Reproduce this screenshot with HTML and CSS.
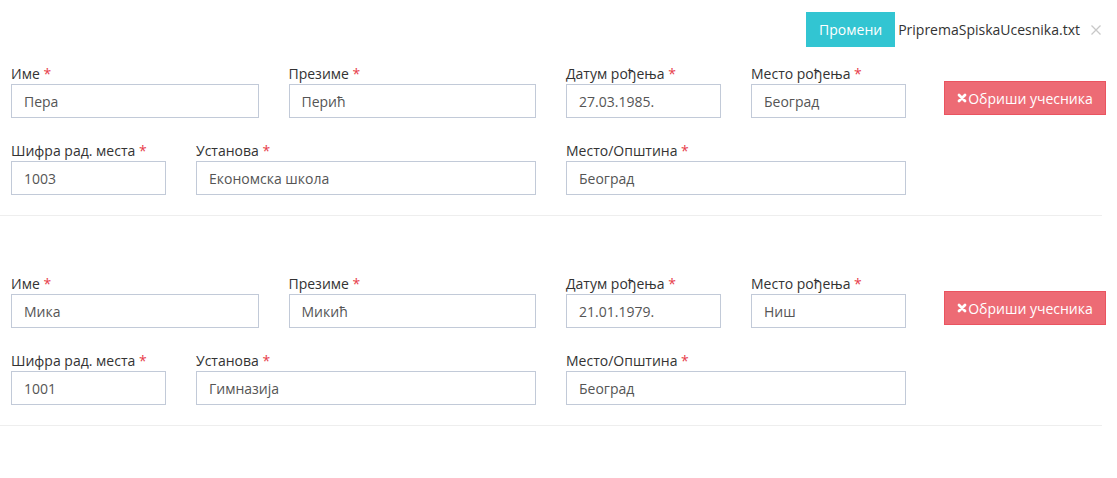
FILE: index.html
```html
<!DOCTYPE html>
<html lang="sr">
<head>
<meta charset="utf-8">
<title>Учесници</title>
<link rel="stylesheet" href="styles.css">
</head>
<body>
<div class="page">
  <div class="file-bar">
    <span class="btn btn-green">Промени</span>
    <span class="file-name">PripremaSpiskaUcesnika.txt</span>
    <svg class="file-remove" viewBox="0 0 10 10" width="10" height="10"><path d="M0.5 0.5 L9.5 9.5 M9.5 0.5 L0.5 9.5" stroke="#c8c8c8" stroke-width="1.3"/></svg>
  </div>

  <div class="participant">
    <div class="grid">
      <div class="field span3"><label>Име <span class="req">*</span></label><input class="form-control" value="Пера"></div>
      <div class="field span3"><label>Презиме <span class="req">*</span></label><input class="form-control" value="Перић"></div>
      <div class="field span2"><label>Датум рођења <span class="req">*</span></label><input class="form-control" value="27.03.1985."></div>
      <div class="field span2"><label>Место рођења <span class="req">*</span></label><input class="form-control" value="Београд"></div>
      <div class="action span2"><button class="btn btn-danger"><svg class="ico" viewBox="0 0 10 10" width="10" height="10"><path d="M2 2 L8 8 M8 2 L2 8" stroke="#fff" stroke-width="2.8" stroke-linecap="round"/></svg>Обриши учесника</button></div>
    </div>
    <div class="grid row2">
      <div class="field span2"><label>Шифра рад. места <span class="req">*</span></label><input class="form-control" value="1003"></div>
      <div class="field span4"><label>Установа <span class="req">*</span></label><input class="form-control" value="Економска школа"></div>
      <div class="field span4"><label>Место/Општина <span class="req">*</span></label><input class="form-control" value="Београд"></div>
    </div>
    <hr class="sep">
  </div>

  <div class="participant">
    <div class="grid">
      <div class="field span3"><label>Име <span class="req">*</span></label><input class="form-control" value="Мика"></div>
      <div class="field span3"><label>Презиме <span class="req">*</span></label><input class="form-control" value="Микић"></div>
      <div class="field span2"><label>Датум рођења <span class="req">*</span></label><input class="form-control" value="21.01.1979."></div>
      <div class="field span2"><label>Место рођења <span class="req">*</span></label><input class="form-control" value="Ниш"></div>
      <div class="action span2"><button class="btn btn-danger"><svg class="ico" viewBox="0 0 10 10" width="10" height="10"><path d="M2 2 L8 8 M8 2 L2 8" stroke="#fff" stroke-width="2.8" stroke-linecap="round"/></svg>Обриши учесника</button></div>
    </div>
    <div class="grid row2">
      <div class="field span2"><label>Шифра рад. места <span class="req">*</span></label><input class="form-control" value="1001"></div>
      <div class="field span4"><label>Установа <span class="req">*</span></label><input class="form-control" value="Гимназија"></div>
      <div class="field span4"><label>Место/Општина <span class="req">*</span></label><input class="form-control" value="Београд"></div>
    </div>
    <hr class="sep">
  </div>
</div>
</body>
</html>
```

FILE: styles.css
```css
* { box-sizing: border-box; }
html, body { margin: 0; padding: 0; background: #fff; }
body {
  font-family: "Open Sans", "Liberation Sans", sans-serif;
  font-size: 14px;
  color: #333;
}
.page { width: 1117px; }

.file-bar {
  display: flex;
  align-items: center;
  justify-content: flex-end;
  padding-top: 12px;
  padding-right: 16px;
  height: 47px;
}
.btn {
  display: inline-flex;
  align-items: center;
  justify-content: center;
  font-family: inherit;
  font-size: 14px;
  color: #fff;
  border: 1px solid transparent;
  border-radius: 0;
  cursor: pointer;
}
.btn-green {
  width: 89px;
  height: 35px;
  background: #32c5d2;
  border-color: #32c5d2;
}
.file-name {
  margin-left: 3px;
  color: #333;
}
.file-remove {
  margin-left: 11px;
  margin-top: 1px;
}

.participant { padding-top: 17px; }
.participant + .participant { padding-top: 58px; }

.grid {
  display: grid;
  grid-template-columns: repeat(12, 62.5px);
  column-gap: 30px;
  padding-left: 11px;
}
.row2 { margin-top: 23px; }
.span2 { grid-column: span 2; }
.span3 { grid-column: span 3; }
.span4 { grid-column: span 4; }

.field label {
  display: block;
  height: 20px;
  line-height: 20px;
  color: #333;
  white-space: nowrap;
}
.req { color: #e73d4a; }
.form-control {
  display: block;
  width: 100%;
  height: 34px;
  padding: 0 12px;
  font-family: inherit;
  font-size: 14px;
  color: #555;
  background: #fff;
  border: 1px solid #c2cad8;
  border-radius: 0;
  outline: none;
}

.action { padding-top: 17px; padding-left: 8px; }
.btn-danger {
  width: 162px;
  height: 34px;
  background: #ed6b75;
  border-color: #ea5460;
  white-space: nowrap;
  padding: 0;
}
.ico { margin-right: 1px; }

.sep {
  width: 1102px;
  height: 0;
  margin: 20px 0 0 0;
  border: 0;
  border-top: 1px solid #eee;
}
```
